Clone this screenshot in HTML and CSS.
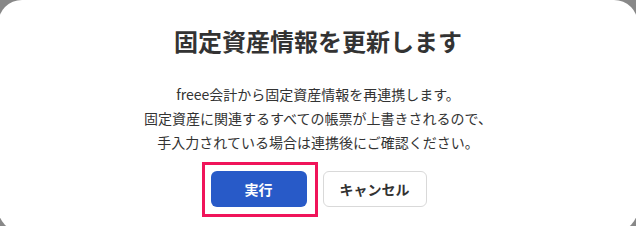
FILE: index.html
```html
<!DOCTYPE html>
<html lang="ja">
<head>
    <meta charset="UTF-8">
    <meta name="viewport" content="width=device-width, initial-scale=1.0">
    <title>固定資産情報を更新します</title>
    <link rel="stylesheet" href="styles.css">
</head>
<body>
    <div class="dialog">
        <h1 class="dialog-title">固定資産情報を更新します</h1>
        <p class="dialog-text">
            freee会計から固定資産情報を再連携します。<br>
            固定資産に関連するすべての帳票が上書きされるので、<br>
            手入力されている場合は連携後にご確認ください。
        </p>
        <div class="button-group">
            <button class="btn btn-primary">実行<span class="highlight"></span></button>
            <button class="btn btn-secondary">キャンセル</button>
        </div>
    </div>
</body>
</html>
```

FILE: styles.css
```css
body {
    margin: 0;
    background-color: #888;
    font-family: "Noto Sans CJK JP", "Noto Sans", sans-serif;
    color: #333;
    overflow: hidden;
}
.dialog {
    width: 640px;
    height: 232px;
    margin-left: -2px;
    box-sizing: border-box;
    padding-top: 23px;
    background-color: #fff;
    border-radius: 24px;
    text-align: center;
}
.dialog-title {
    margin: 0;
    font-size: 24px;
    line-height: 36px;
    font-weight: bold;
    color: #333;
}
.dialog-text {
    margin: 23px 0 0;
    font-size: 14px;
    line-height: 24px;
    color: #333;
}
.button-group {
    display: flex;
    justify-content: center;
    gap: 16px;
    margin-top: 17px;
    padding-left: 1px;
}
.btn {
    position: relative;
    height: 36px;
    font-family: inherit;
    font-size: 14px;
    font-weight: bold;
    border-radius: 6px;
    cursor: pointer;
}
.btn-primary {
    width: 96px;
    background-color: #285ac8;
    color: #fff;
    border: none;
}
.btn-secondary {
    width: 104px;
    background-color: #fff;
    color: #333;
    border: 1px solid #d9d9d9;
}
.highlight {
    position: absolute;
    top: -9px;
    left: -9px;
    right: -11px;
    bottom: -10px;
    border: 3px solid #f0145a;
}
```
